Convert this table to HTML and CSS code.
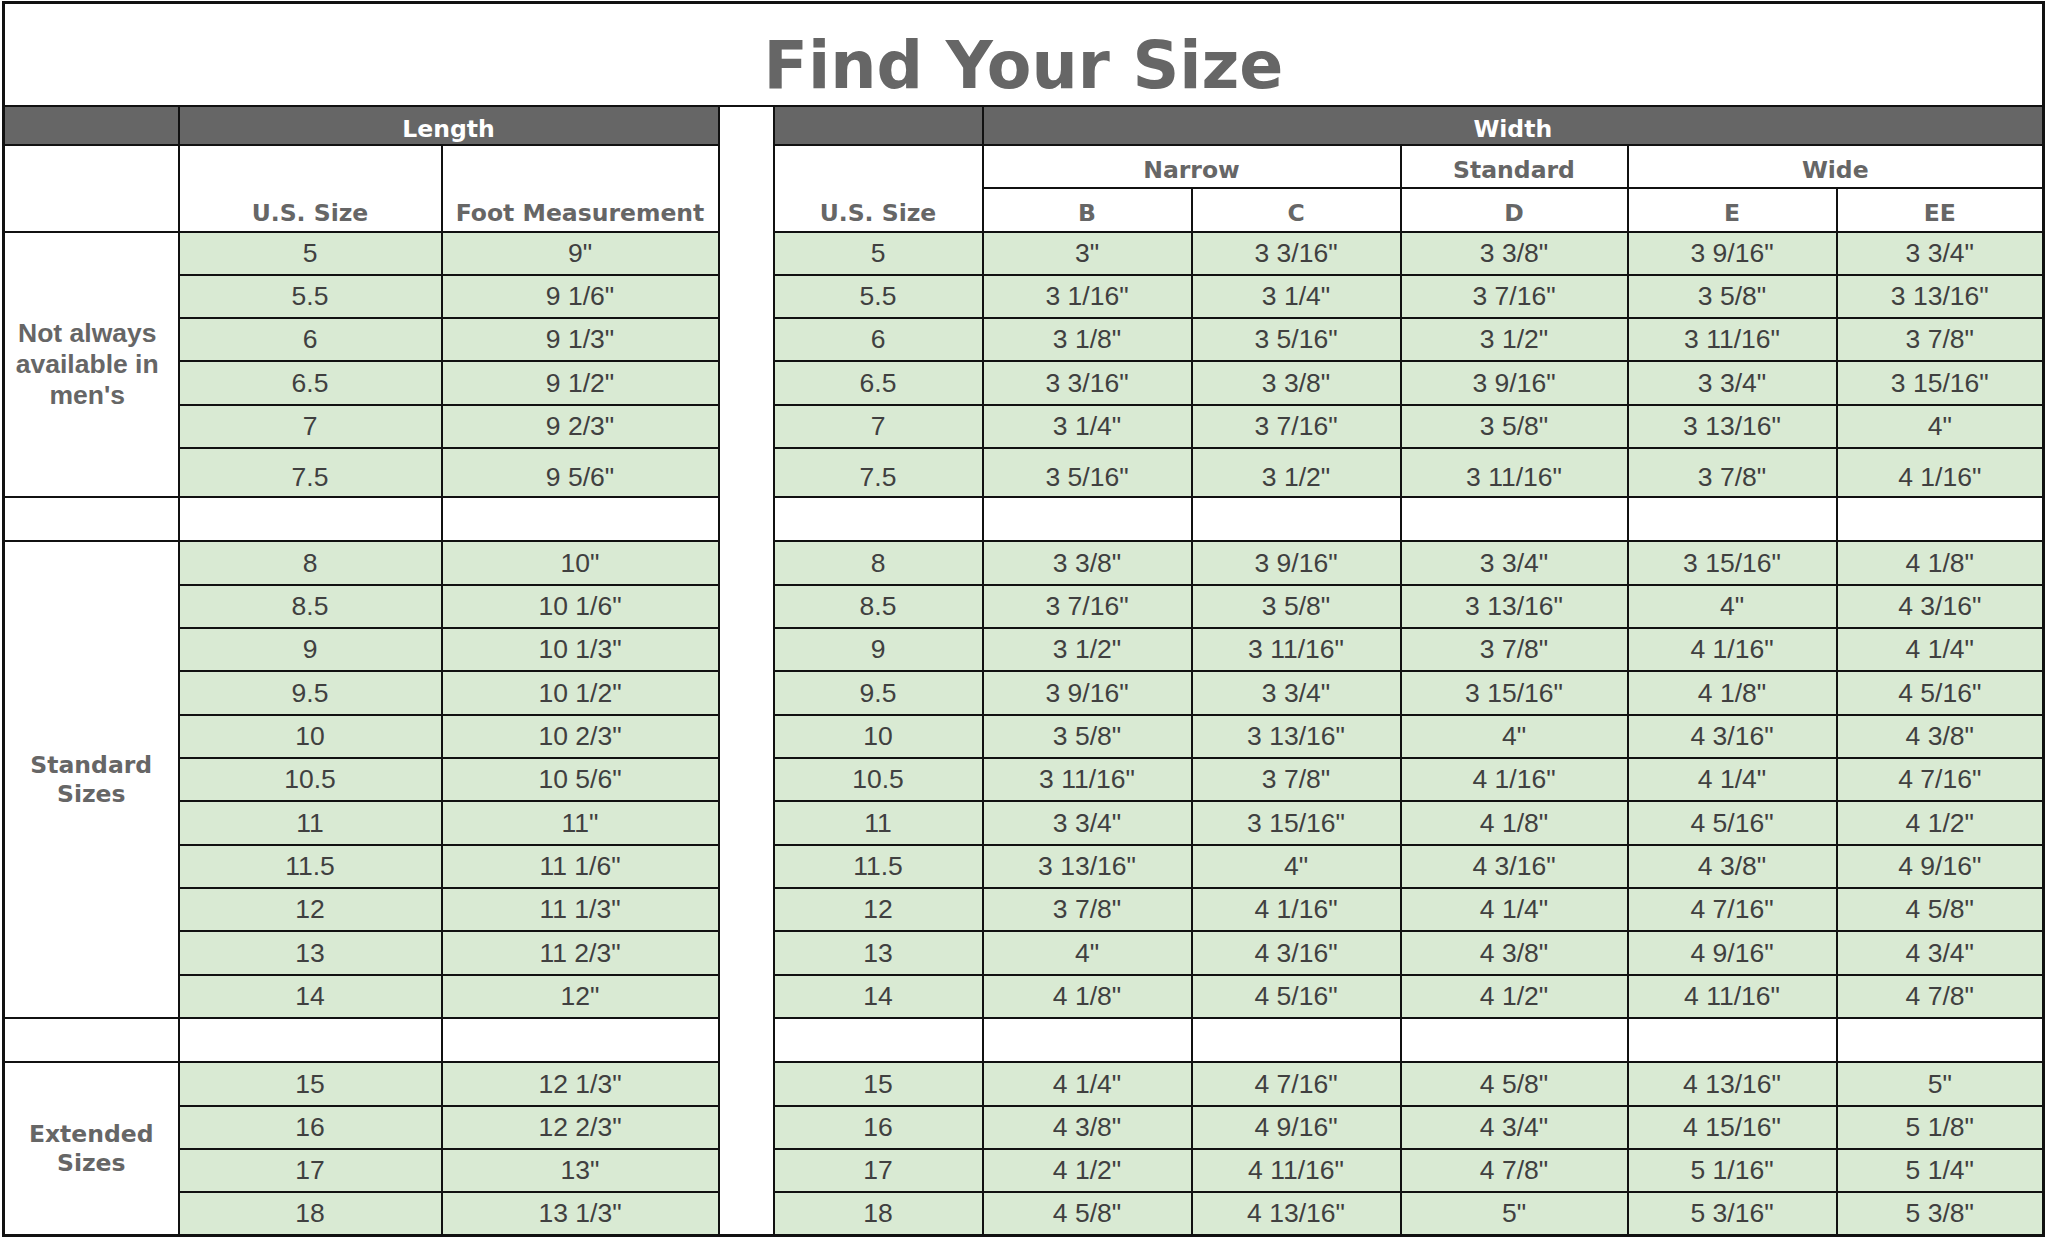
FILE: index.html
```html
<!DOCTYPE html>
<html lang="en">
<head>
<meta charset="utf-8">
<title>Find Your Size</title>
<link rel="stylesheet" href="styles.css">
</head>
<body>
<table class="chart">
  <colgroup>
    <col class="c-label"><col class="c-size"><col class="c-foot"><col class="c-gap">
    <col class="c-rsize"><col class="c-b"><col class="c-c"><col class="c-d"><col class="c-e"><col class="c-ee">
  </colgroup>
  <tr class="r-title"><td colspan="10" class="title">Find Your Size</td></tr>
  <tr class="r-head">
    <td class="hd"></td><td class="hd" colspan="2">Length</td>
    <td class="gap" rowspan="26"></td>
    <td class="hd"></td><td class="hd" colspan="5">Width</td>
  </tr>
  <tr class="r-sub">
    <td class="blank" rowspan="2"></td>
    <th class="sub bottom" rowspan="2">U.S. Size</th>
    <th class="sub bottom" rowspan="2">Foot Measurement</th>
    <th class="sub bottom" rowspan="2">U.S. Size</th>
    <th class="sub group" colspan="2">Narrow</th>
    <th class="sub group">Standard</th>
    <th class="sub group" colspan="2">Wide</th>
  </tr>
  <tr class="r-sub">
    <th class="sub bottom">B</th><th class="sub bottom">C</th><th class="sub bottom">D</th><th class="sub bottom">E</th><th class="sub bottom">EE</th>
  </tr>

  <tr class="r-data"><td class="label arial" rowspan="6">Not always available in men's</td><td class="v">5</td><td class="v">9"</td><td class="v">5</td><td class="v">3"</td><td class="v">3 3/16"</td><td class="v">3 3/8"</td><td class="v">3 9/16"</td><td class="v">3 3/4"</td></tr>
  <tr class="r-data"><td class="v">5.5</td><td class="v">9 1/6"</td><td class="v">5.5</td><td class="v">3 1/16"</td><td class="v">3 1/4"</td><td class="v">3 7/16"</td><td class="v">3 5/8"</td><td class="v">3 13/16"</td></tr>
  <tr class="r-data"><td class="v">6</td><td class="v">9 1/3"</td><td class="v">6</td><td class="v">3 1/8"</td><td class="v">3 5/16"</td><td class="v">3 1/2"</td><td class="v">3 11/16"</td><td class="v">3 7/8"</td></tr>
  <tr class="r-data"><td class="v">6.5</td><td class="v">9 1/2"</td><td class="v">6.5</td><td class="v">3 3/16"</td><td class="v">3 3/8"</td><td class="v">3 9/16"</td><td class="v">3 3/4"</td><td class="v">3 15/16"</td></tr>
  <tr class="r-data"><td class="v">7</td><td class="v">9 2/3"</td><td class="v">7</td><td class="v">3 1/4"</td><td class="v">3 7/16"</td><td class="v">3 5/8"</td><td class="v">3 13/16"</td><td class="v">4"</td></tr>
  <tr class="r-tall"><td class="v">7.5</td><td class="v">9 5/6"</td><td class="v">7.5</td><td class="v">3 5/16"</td><td class="v">3 1/2"</td><td class="v">3 11/16"</td><td class="v">3 7/8"</td><td class="v">4 1/16"</td></tr>

  <tr class="r-blank"><td class="blank"></td><td class="blank"></td><td class="blank"></td><td class="blank"></td><td class="blank"></td><td class="blank"></td><td class="blank"></td><td class="blank"></td><td class="blank"></td></tr>

  <tr class="r-data"><td class="label" rowspan="11">Standard<br>Sizes</td><td class="v">8</td><td class="v">10"</td><td class="v">8</td><td class="v">3 3/8"</td><td class="v">3 9/16"</td><td class="v">3 3/4"</td><td class="v">3 15/16"</td><td class="v">4 1/8"</td></tr>
  <tr class="r-data"><td class="v">8.5</td><td class="v">10 1/6"</td><td class="v">8.5</td><td class="v">3 7/16"</td><td class="v">3 5/8"</td><td class="v">3 13/16"</td><td class="v">4"</td><td class="v">4 3/16"</td></tr>
  <tr class="r-data"><td class="v">9</td><td class="v">10 1/3"</td><td class="v">9</td><td class="v">3 1/2"</td><td class="v">3 11/16"</td><td class="v">3 7/8"</td><td class="v">4 1/16"</td><td class="v">4 1/4"</td></tr>
  <tr class="r-data"><td class="v">9.5</td><td class="v">10 1/2"</td><td class="v">9.5</td><td class="v">3 9/16"</td><td class="v">3 3/4"</td><td class="v">3 15/16"</td><td class="v">4 1/8"</td><td class="v">4 5/16"</td></tr>
  <tr class="r-data"><td class="v">10</td><td class="v">10 2/3"</td><td class="v">10</td><td class="v">3 5/8"</td><td class="v">3 13/16"</td><td class="v">4"</td><td class="v">4 3/16"</td><td class="v">4 3/8"</td></tr>
  <tr class="r-data"><td class="v">10.5</td><td class="v">10 5/6"</td><td class="v">10.5</td><td class="v">3 11/16"</td><td class="v">3 7/8"</td><td class="v">4 1/16"</td><td class="v">4 1/4"</td><td class="v">4 7/16"</td></tr>
  <tr class="r-data"><td class="v">11</td><td class="v">11"</td><td class="v">11</td><td class="v">3 3/4"</td><td class="v">3 15/16"</td><td class="v">4 1/8"</td><td class="v">4 5/16"</td><td class="v">4 1/2"</td></tr>
  <tr class="r-data"><td class="v">11.5</td><td class="v">11 1/6"</td><td class="v">11.5</td><td class="v">3 13/16"</td><td class="v">4"</td><td class="v">4 3/16"</td><td class="v">4 3/8"</td><td class="v">4 9/16"</td></tr>
  <tr class="r-data"><td class="v">12</td><td class="v">11 1/3"</td><td class="v">12</td><td class="v">3 7/8"</td><td class="v">4 1/16"</td><td class="v">4 1/4"</td><td class="v">4 7/16"</td><td class="v">4 5/8"</td></tr>
  <tr class="r-data"><td class="v">13</td><td class="v">11 2/3"</td><td class="v">13</td><td class="v">4"</td><td class="v">4 3/16"</td><td class="v">4 3/8"</td><td class="v">4 9/16"</td><td class="v">4 3/4"</td></tr>
  <tr class="r-data"><td class="v">14</td><td class="v">12"</td><td class="v">14</td><td class="v">4 1/8"</td><td class="v">4 5/16"</td><td class="v">4 1/2"</td><td class="v">4 11/16"</td><td class="v">4 7/8"</td></tr>

  <tr class="r-blank"><td class="blank"></td><td class="blank"></td><td class="blank"></td><td class="blank"></td><td class="blank"></td><td class="blank"></td><td class="blank"></td><td class="blank"></td><td class="blank"></td></tr>

  <tr class="r-data"><td class="label" rowspan="4">Extended<br>Sizes</td><td class="v">15</td><td class="v">12 1/3"</td><td class="v">15</td><td class="v">4 1/4"</td><td class="v">4 7/16"</td><td class="v">4 5/8"</td><td class="v">4 13/16"</td><td class="v">5"</td></tr>
  <tr class="r-data"><td class="v">16</td><td class="v">12 2/3"</td><td class="v">16</td><td class="v">4 3/8"</td><td class="v">4 9/16"</td><td class="v">4 3/4"</td><td class="v">4 15/16"</td><td class="v">5 1/8"</td></tr>
  <tr class="r-data"><td class="v">17</td><td class="v">13"</td><td class="v">17</td><td class="v">4 1/2"</td><td class="v">4 11/16"</td><td class="v">4 7/8"</td><td class="v">5 1/16"</td><td class="v">5 1/4"</td></tr>
  <tr class="r-data"><td class="v">18</td><td class="v">13 1/3"</td><td class="v">18</td><td class="v">4 5/8"</td><td class="v">4 13/16"</td><td class="v">5"</td><td class="v">5 3/16"</td><td class="v">5 3/8"</td></tr>
</table>
</body>
</html>
```
FILE: styles.css
```css
html, body {
  margin: 0;
  padding: 0;
  background: #ffffff;
}

body {
  padding: 1px 2px 0 2px;
}

.chart {
  border-collapse: collapse;
  table-layout: fixed;
  width: 2042px;
  border: 3px solid #111;
  font-family: "Liberation Sans", Arial, sans-serif;
}

.c-label { width: 175px; }
.c-size { width: 263px; }
.c-foot { width: 277px; }
.c-gap { width: 55px; }
.c-rsize { width: 209px; }
.c-b { width: 209px; }
.c-c { width: 209px; }
.c-d { width: 227px; }
.c-e { width: 209px; }
.c-ee { width: 207px; }

.chart td, .chart th {
  border: 2px solid #111;
  padding: 0;
  text-align: center;
  vertical-align: middle;
}

.r-title { height: 103px; }
.r-head { height: 39px; }
.r-sub { height: 43.5px; }
.r-data { height: 43.33px; }
.r-tall { height: 49px; }
.r-blank { height: 44.3px; }

.chart .title {
  font-family: "DejaVu Sans", Verdana, sans-serif;
  font-weight: bold;
  font-size: 65px;
  line-height: 57px;
  color: #666666;
  vertical-align: bottom;
  padding-bottom: 11px;
}

.chart .hd {
  background: #666666;
  color: #ffffff;
  font-family: "DejaVu Sans", Verdana, sans-serif;
  font-weight: bold;
  font-size: 23.5px;
  padding-top: 7px;
}

.chart .gap {
  background: #ffffff;
  border-top: 2px solid #111;
}

.sub {
  font-family: "DejaVu Sans", Verdana, sans-serif;
  font-weight: bold;
  font-size: 23.5px;
  color: #666666;
  background: #ffffff;
}

.chart .group {
  padding-top: 8px;
}

.chart .bottom {
  vertical-align: bottom;
  padding-bottom: 4px;
}

.blank {
  background: #ffffff;
}

.v {
  background: #d9ead3;
  color: #404040;
  font-size: 26.5px;
}

.chart .r-tall .v {
  padding-top: 9px;
}

.label {
  background: #ffffff;
  color: #666666;
  font-family: "DejaVu Sans", Verdana, sans-serif;
  font-weight: bold;
  font-size: 23.5px;
  line-height: 29px;
}

.chart .label.arial {
  font-family: "Liberation Sans", Arial, sans-serif;
  font-size: 26.5px;
  line-height: 31px;
  padding: 0 8px 0 0;
}
```
